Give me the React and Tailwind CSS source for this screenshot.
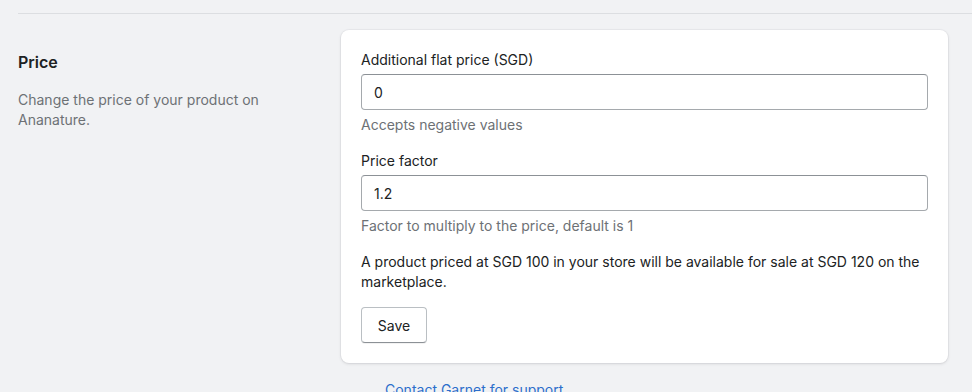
export default function App() {
  return (
    <div
      className="w-[972px] h-[392px] overflow-hidden bg-[#f1f2f4] text-[#202223]"
      style={{ fontFamily: "Inter, 'Noto Sans', sans-serif" }}
    >
      <div className="pt-[13px] pl-[18px]">
        <div className="h-px bg-[#dcdee1]" />
      </div>
      <div className="flex pl-[18px] pr-[24px] pt-[16px]">
        <div className="w-[323px] shrink-0 pr-5 pt-[20px]">
          <h2 className="text-[16px] leading-6 font-semibold text-[#202223]">Price</h2>
          <p className="mt-4 text-[14px] leading-[20px] text-[#6d7175]">
            Change the price of your product on Ananature.
          </p>
        </div>
        <div className="flex-1">
          <div className="bg-white rounded-lg shadow-[0_0_0_1px_rgba(63,63,68,0.04),0_1px_3px_0_rgba(63,63,68,0.15)] px-5 pt-5 pb-5">
            <div className="flex flex-col">
              <label className="text-[14px] leading-5">Additional flat price (SGD)</label>
              <div className="mt-1 h-[36px] rounded-[4px] border border-[#a5a9ad] border-t-[#8c9196] flex items-center px-3 text-[14px]">
                0
              </div>
              <p className="mt-[5px] text-[14px] leading-5 text-[#6d7175]">Accepts negative values</p>
            </div>
            <div className="flex flex-col mt-4">
              <label className="text-[14px] leading-5">Price factor</label>
              <div className="mt-1 h-[36px] rounded-[4px] border border-[#a5a9ad] border-t-[#8c9196] flex items-center px-3 text-[14px]">
                1.2
              </div>
              <p className="mt-[5px] text-[14px] leading-5 text-[#6d7175]">
                Factor to multiply to the price, default is 1
              </p>
            </div>
            <p className="mt-4 text-[14px] leading-5">
              A product priced at SGD 100 in your store will be available for sale at SGD 120 on the marketplace.
            </p>
            <button className="mt-[15px] h-[36px] w-[66px] rounded-[4px] border border-[#babfc3] border-b-[#8c9196] shadow-[0_1px_0_rgba(0,0,0,0.05)] bg-white text-[14px] text-[#202223]">
              Save
            </button>
          </div>
          <div className="mt-[17px] pl-[44px] text-[14px] leading-5 text-[#2c6ecb]">
            Contact Garnet for support
          </div>
        </div>
      </div>
    </div>
  );
}
